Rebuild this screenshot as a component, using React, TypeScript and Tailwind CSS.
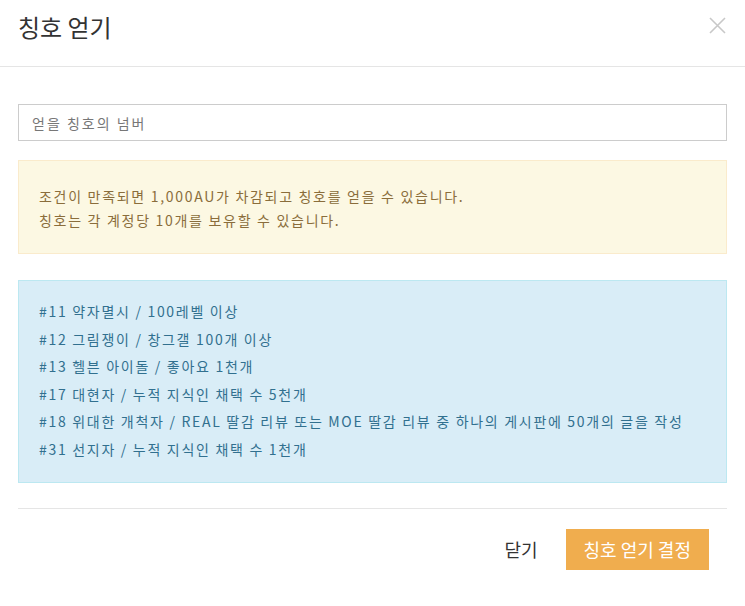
import React from "react";

const FONT = { fontFamily: '"Noto Sans CJK KR", "Noto Sans", sans-serif' };

const TITLES = [
  "#11 약자멸시 / 100레벨 이상",
  "#12 그림쟁이 / 창그갤 100개 이상",
  "#13 헬븐 아이돌 / 좋아요 1천개",
  "#17 대현자 / 누적 지식인 채택 수 5천개",
  "#18 위대한 개척자 / REAL 딸감 리뷰 또는 MOE 딸감 리뷰 중 하나의 게시판에 50개의 글을 작성",
  "#31 선지자 / 누적 지식인 채택 수 1천개",
];

export default function App() {
  return (
    <div className="w-[745px] h-[606px] bg-white text-[#333]" style={FONT}>
      {/* Header */}
      <div className="h-[67px] border-b border-[#e5e5e5] flex items-center justify-between pl-[18px] pr-[19px]">
        <h1 className="text-[24px] leading-none font-normal text-[#333] -mt-[12px]">칭호 얻기</h1>
        <button className="text-[#c8c8c8] -mt-[16px]">
          <svg width="17" height="17" viewBox="0 0 17 17" fill="none" stroke="currentColor" strokeWidth="1.6">
            <path d="M1 1L16 16M16 1L1 16" />
          </svg>
        </button>
      </div>

      {/* Body */}
      <div className="px-[18px] pt-[37px]">
        <input
          className="w-full h-[37px] border border-[#ccc] px-[13px] text-[14px] tracking-[2px] outline-none placeholder:text-[#777]"
          placeholder="얻을 칭호의 넘버"
        />

        <div className="mt-[19px] border border-[#faebcc] bg-[#fcf8e3] text-[#8a6d3b] px-[20px] pt-[23px] pb-[21px] text-[14px] tracking-[1.7px] leading-[24px]">
          <p>조건이 만족되면 1,000AU가 차감되고 칭호를 얻을 수 있습니다.</p>
          <p>칭호는 각 계정당 10개를 보유할 수 있습니다.</p>
        </div>

        <div className="mt-[26px] border border-[#bce8f1] bg-[#d9edf7] text-[#31708f] px-[20px] pt-[17px] pb-[18px] text-[14px] tracking-[1.7px] leading-[27.6px]">
          {TITLES.map((t) => (
            <p key={t}>{t}</p>
          ))}
        </div>

        {/* Footer */}
        <div className="mt-[25px] border-t border-[#e5e5e5] pt-[20px] flex items-center justify-end gap-[28px] pr-[18px]">
          <button className="text-[18px] text-[#333]">닫기</button>
          <button className="h-[41px] px-[18px] bg-[#f0ad4e] text-white text-[18px]">칭호 얻기 결정</button>
        </div>
      </div>
    </div>
  );
}
